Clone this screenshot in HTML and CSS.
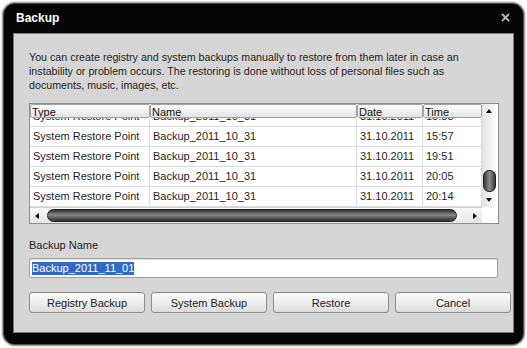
FILE: index.html
```html
<!DOCTYPE html>
<html lang="en">
<head>
    <meta charset="UTF-8">
    <title>Backup</title>
    <link rel="stylesheet" href="styles.css">
</head>
<body>
    <div class="window">
        <div class="titlebar">
            <span class="title">Backup</span>
            <svg class="close" width="9" height="9" viewBox="0 0 9 9">
                <path d="M1 1 L8 8 M8 1 L1 8" stroke="#b4b4b4" stroke-width="1.9"/>
            </svg>
        </div>
        <div class="panel">
            <p class="intro">You can create registry and system backups manually to restore from them later in case an<br>instability or problem occurs. The restoring is done without loss of personal files such as<br>documents, music, images, etc.</p>

            <div class="grid">
                <div class="grid-main">
                    <div class="grid-view">
                        <div class="grid-head">
                            <div class="head-cell">Type</div>
                            <div class="head-cell">Name</div>
                            <div class="head-cell">Date</div>
                            <div class="head-cell">Time</div>
                        </div>
                        <div class="grid-body">
                            <div class="grid-rows">
                                <div class="row"><span>System Restore Point</span><span>Backup_2011_10_31</span><span>31.10.2011</span><span>15:33</span></div>
                                <div class="row"><span>System Restore Point</span><span>Backup_2011_10_31</span><span>31.10.2011</span><span>15:57</span></div>
                                <div class="row"><span>System Restore Point</span><span>Backup_2011_10_31</span><span>31.10.2011</span><span>19:51</span></div>
                                <div class="row"><span>System Restore Point</span><span>Backup_2011_10_31</span><span>31.10.2011</span><span>20:05</span></div>
                                <div class="row"><span>System Restore Point</span><span>Backup_2011_10_31</span><span>31.10.2011</span><span>20:14</span></div>
                            </div>
                        </div>
                    </div>
                    <div class="vscroll">
                        <div class="arrow arrow-up"></div>
                        <div class="vtrack"><div class="vthumb"></div></div>
                        <div class="arrow arrow-down"></div>
                    </div>
                </div>
                <div class="grid-foot">
                    <div class="hscroll">
                        <div class="arrow arrow-left"></div>
                        <div class="htrack"><div class="hthumb"></div></div>
                        <div class="arrow arrow-right"></div>
                    </div>
                    <div class="corner"></div>
                </div>
            </div>

            <div class="field-label">Backup Name</div>
            <div class="field"><span class="selected">Backup_2011_11_01</span></div>

            <div class="actions">
                <button>Registry Backup</button>
                <button>System Backup</button>
                <button>Restore</button>
                <button>Cancel</button>
            </div>
        </div>
    </div>
</body>
</html>
```

FILE: styles.css
```css
body {
    margin: 0;
    padding: 2px;
    background: #fff;
    font-family: "Liberation Sans", Arial, sans-serif;
    font-size: 11px;
    color: #1e1e1e;
}

.window {
    width: 523px;
    height: 344px;
    box-sizing: border-box;
    border: 1px solid #a8a8a8;
    border-radius: 13px;
    background: #050505;
    box-shadow: 0 0 0 1px #e2e2e2, inset 0 0 0 1px #4a4a4a;
    display: flex;
    flex-direction: column;
}

.titlebar {
    height: 30px;
    display: flex;
    align-items: center;
    justify-content: space-between;
    padding: 0 14px 0 13px;
}

.title {
    color: #fff;
    font-weight: bold;
    font-size: 12px;
}

.close {
    margin-top: -1px;
}

.panel {
    margin: 0 10px;
    height: 300px;
    box-sizing: border-box;
    background: #d6d6d6;
    border: 1px solid #7c7c7c;
    padding: 16px 0 0 15px;
}

.intro {
    margin: 0;
    font-size: 10.7px;
    line-height: 14px;
}

/* list view */

.grid {
    margin-top: 11px;
    width: 468px;
    border: 1px solid #8e8e8e;
    background: #fff;
}

.grid-main {
    display: flex;
}

.grid-view {
    width: 452px;
}

.grid-head {
    display: grid;
    grid-template-columns: 120px 207px 66px 59px;
    height: 14px;
}

.head-cell {
    box-sizing: border-box;
    border: 1px solid #a2a2a2;
    border-radius: 2px;
    background: linear-gradient(#fefefe, #e4e4e4);
    padding-left: 1px;
    line-height: 14px;
    color: #111;
    overflow: hidden;
}

.grid-body {
    height: 89px;
    overflow: hidden;
}

.grid-rows {
    margin-top: -11px;
}

.row {
    display: grid;
    grid-template-columns: 120px 207px 66px 59px;
    height: 20px;
    box-sizing: border-box;
    border-bottom: 1px solid #dcdcdc;
}

.row span {
    box-sizing: border-box;
    border-right: 1px solid #dcdcdc;
    padding-left: 3px;
    line-height: 19px;
    white-space: nowrap;
    overflow: hidden;
}

.vscroll {
    width: 14px;
    display: flex;
    flex-direction: column;
    background: linear-gradient(90deg, #e4e4e4, #fbfbfb);
}

.vtrack {
    flex: 1;
    display: flex;
    flex-direction: column;
    justify-content: flex-end;
    align-items: center;
    padding-bottom: 1px;
}

.vthumb {
    width: 11px;
    height: 20px;
    border: 1px solid #222;
    border-radius: 6px;
    background: linear-gradient(90deg, #3a3a3a, #8c8c8c 50%, #3a3a3a);
}

.arrow {
    width: 14px;
    height: 14px;
    display: flex;
    align-items: center;
    justify-content: center;
}

.arrow::before {
    content: "";
    width: 0;
    height: 0;
    border: 3px solid transparent;
}

.arrow-up::before {
    border-bottom: 4px solid #111;
    border-top-width: 0;
}

.arrow-down::before {
    border-top: 4px solid #111;
    border-bottom-width: 0;
}

.arrow-left::before {
    border-right: 4px solid #111;
    border-left-width: 0;
}

.arrow-right::before {
    border-left: 4px solid #111;
    border-right-width: 0;
}

.grid-foot {
    display: flex;
    height: 16px;
}

.hscroll {
    width: 452px;
    display: flex;
    align-items: center;
    border-top: 1px solid #d0d0d0;
    background: linear-gradient(#f8f8f8, #e6e6e6);
}

.htrack {
    flex: 1;
    padding-left: 3px;
}

.hthumb {
    width: 408px;
    height: 11px;
    border: 1px solid #222;
    border-radius: 7px;
    background: linear-gradient(#2e2e2e, #8a8a8a 45%, #4a4a4a 80%, #2e2e2e);
    box-shadow: 6px 0 4px -2px #fff;
}

.corner {
    flex: 1;
    background: #fff;
}

/* name field */

.field-label {
    margin-top: 14px;
    line-height: 14px;
}

.field {
    margin-top: 6px;
    width: 469px;
    height: 20px;
    box-sizing: border-box;
    border: 1px solid #a0a0a0;
    border-radius: 2px;
    background: #fff;
    box-shadow: inset 0 1px 1px #ddd;
    display: flex;
    align-items: center;
    padding-left: 2px;
}

.selected {
    background: #3169c6;
    color: #fff;
    line-height: 13px;
    font-size: 11px;
}

/* buttons */

.actions {
    margin-top: 14px;
    display: flex;
    gap: 6px;
}

.actions button {
    width: 116px;
    height: 21px;
    padding: 0;
    border: 1px solid #8c8c8c;
    border-radius: 3px;
    background: linear-gradient(#fcfcfc, #ececec 55%, #dcdcdc);
    font-family: inherit;
    font-size: 11px;
    color: #222;
}
```
